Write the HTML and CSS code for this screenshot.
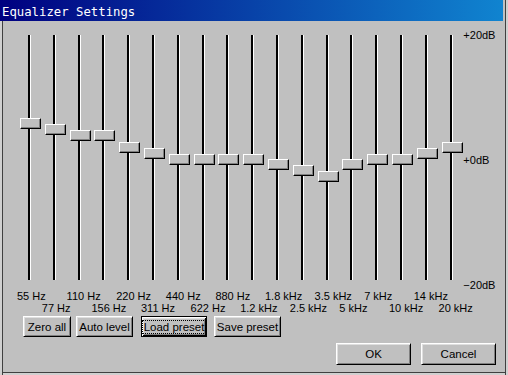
FILE: index.html
```html
<!DOCTYPE html>
<html>
<head>
<meta charset="utf-8">
<link rel="stylesheet" href="styles.css">
</head>
<body>
<div class="window">
  <div class="titlebar"><span class="title">Equalizer Settings</span></div>
  <div class="eq">
    <div class="sliders">
      <div class="col"><div class="trackarea"><div class="track"></div><div class="knob" style="top:83px"></div></div><div class="lbl">55 Hz</div></div>
      <div class="col"><div class="trackarea"><div class="track"></div><div class="knob" style="top:89px"></div></div><div class="lbl low">77 Hz</div></div>
      <div class="col"><div class="trackarea"><div class="track"></div><div class="knob" style="top:95px"></div></div><div class="lbl">110 Hz</div></div>
      <div class="col"><div class="trackarea"><div class="track"></div><div class="knob" style="top:95px"></div></div><div class="lbl low">156 Hz</div></div>
      <div class="col"><div class="trackarea"><div class="track"></div><div class="knob" style="top:107px"></div></div><div class="lbl">220 Hz</div></div>
      <div class="col"><div class="trackarea"><div class="track"></div><div class="knob" style="top:113px"></div></div><div class="lbl low">311 Hz</div></div>
      <div class="col"><div class="trackarea"><div class="track"></div><div class="knob" style="top:119px"></div></div><div class="lbl">440 Hz</div></div>
      <div class="col"><div class="trackarea"><div class="track"></div><div class="knob" style="top:119px"></div></div><div class="lbl low">622 Hz</div></div>
      <div class="col"><div class="trackarea"><div class="track"></div><div class="knob" style="top:119px"></div></div><div class="lbl">880 Hz</div></div>
      <div class="col"><div class="trackarea"><div class="track"></div><div class="knob" style="top:119px"></div></div><div class="lbl low">1.2 kHz</div></div>
      <div class="col"><div class="trackarea"><div class="track"></div><div class="knob" style="top:124px"></div></div><div class="lbl">1.8 kHz</div></div>
      <div class="col"><div class="trackarea"><div class="track"></div><div class="knob" style="top:130px"></div></div><div class="lbl low">2.5 kHz</div></div>
      <div class="col"><div class="trackarea"><div class="track"></div><div class="knob" style="top:136px"></div></div><div class="lbl">3.5 kHz</div></div>
      <div class="col"><div class="trackarea"><div class="track"></div><div class="knob" style="top:124px"></div></div><div class="lbl low">5 kHz</div></div>
      <div class="col"><div class="trackarea"><div class="track"></div><div class="knob" style="top:119px"></div></div><div class="lbl">7 kHz</div></div>
      <div class="col"><div class="trackarea"><div class="track"></div><div class="knob" style="top:119px"></div></div><div class="lbl low">10 kHz</div></div>
      <div class="col"><div class="trackarea"><div class="track"></div><div class="knob" style="top:113px"></div></div><div class="lbl">14 kHz</div></div>
      <div class="col"><div class="trackarea"><div class="track"></div><div class="knob" style="top:107px"></div></div><div class="lbl low">20 kHz</div></div>
    </div>
    <div class="dbscale">
      <span>+20dB</span>
      <span>+0dB</span>
      <span>&minus;20dB</span>
    </div>
  </div>
  <div class="presets">
    <button class="btn b-zero">Zero all</button>
    <button class="btn b-auto">Auto level</button>
    <button class="btn default b-load"><span class="focus">Load preset</span></button>
    <button class="btn b-save">Save preset</button>
  </div>
  <div class="actions">
    <button class="btn b-dlg">OK</button>
    <button class="btn b-dlg">Cancel</button>
  </div>
</div>
</body>
</html>
```
FILE: styles.css
```css
html, body {
  margin: 0;
  padding: 0;
  background: #c0c0c0;
}
.window {
  position: relative;
  width: 508px;
  height: 375px;
  box-sizing: border-box;
  background: #c0c0c0;
  font-family: "Liberation Sans", Arial, sans-serif;
  color: #000;
  overflow: hidden;
  box-shadow:
    inset 2px 0 0 #d0d0d0,
    inset 3px 0 0 #404040,
    inset -2px 0 0 #d0d0d0,
    inset -3px 0 0 #404040,
    inset 0 -2px 0 #d0d0d0,
    inset 0 -3px 0 #404040;
}
.titlebar {
  height: 21px;
  margin: 0 5px 0 0;
  box-sizing: border-box;
  padding: 5px 0 0 2px;
  background: linear-gradient(to right, #000080, #1084d0);
}
.title {
  display: block;
  font-family: "DejaVu Sans Mono", monospace;
  font-size: 12.3px;
  line-height: 15px;
  color: #fff;
  white-space: nowrap;
}
.eq {
  display: flex;
  align-items: flex-start;
  margin-top: 14px;
  padding-left: 17px;
}
.sliders {
  display: grid;
  grid-template-columns: repeat(18, 24.8px);
}
.col {
  display: flex;
  flex-direction: column;
}
.trackarea {
  position: relative;
  height: 245px;
}
.track {
  margin-left: 11px;
  width: 2px;
  height: 100%;
  background: #000;
  border-right: 1px solid #fff;
}
.knob {
  position: absolute;
  left: 3px;
  width: 21px;
  height: 11px;
  box-sizing: border-box;
  background: #c0c0c0;
  border: 1px solid;
  border-color: #fff #000 #000 #fff;
  box-shadow: inset -1px -1px 0 #808080;
}
.lbl {
  margin-top: 10px;
  height: 24px;
  font-size: 11px;
  line-height: 12px;
  white-space: nowrap;
}
.lbl.low {
  box-sizing: border-box;
  padding-top: 12px;
}
.dbscale {
  display: flex;
  flex-direction: column;
  justify-content: space-between;
  margin-top: -6.5px;
  height: 262px;
  font-size: 11px;
  line-height: 12px;
  white-space: nowrap;
}
.btn {
  font-family: "Liberation Sans", Arial, sans-serif;
  font-size: 11.5px;
  color: #000;
  background: #c0c0c0;
  box-sizing: border-box;
  padding: 0;
  margin: 0;
  border: 1px solid;
  border-color: #fff #000 #000 #fff;
  box-shadow: inset 1px 1px 0 #dfdfdf, inset -1px -1px 0 #808080;
  white-space: nowrap;
}
.presets {
  display: flex;
  margin-top: 2px;
  padding-left: 23px;
}
.presets .btn {
  height: 21px;
}
.b-zero { width: 48px; margin-right: 5px; }
.b-auto { width: 57px; margin-right: 8px; }
.b-load { width: 66px; margin-right: 7px; }
.b-save { width: 67px; }
.btn.default {
  border-color: #000;
  box-shadow:
    inset 1px 1px 0 #fff,
    inset -1px -1px 0 #000,
    inset 2px 2px 0 #dfdfdf,
    inset -2px -2px 0 #808080;
}
.focus {
  outline: 1px dotted #000;
  outline-offset: 0;
  padding: 0 1px;
}
.actions {
  display: flex;
  justify-content: flex-end;
  gap: 10px;
  margin-top: 6px;
  padding-right: 12px;
}
.b-dlg {
  width: 75px;
  height: 22px;
}
```
